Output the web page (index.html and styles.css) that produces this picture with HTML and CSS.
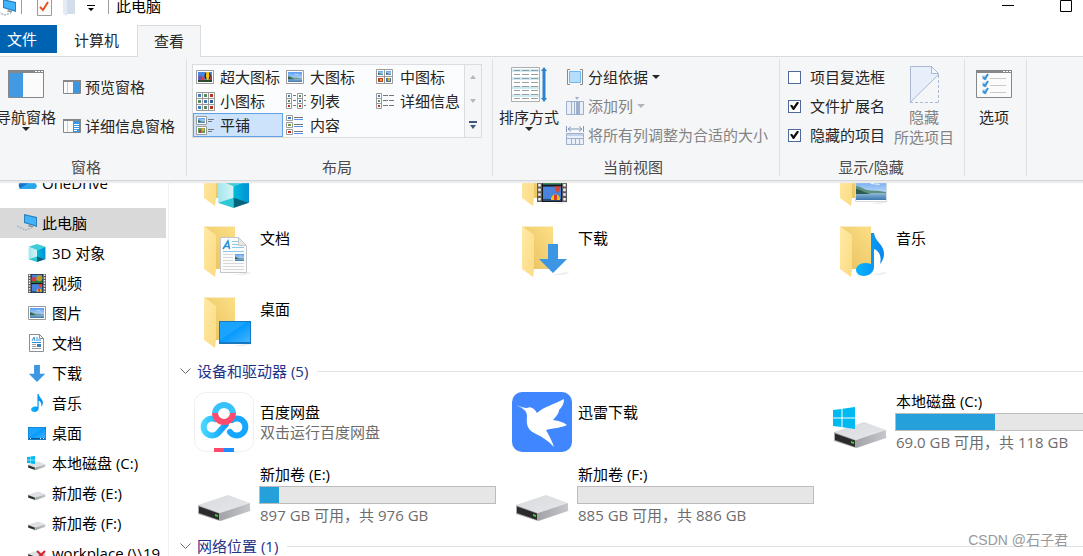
FILE: index.html
```html
<!DOCTYPE html>
<html lang="zh-CN">
<head>
  <meta charset="UTF-8">
  <meta name="viewport" content="width=device-width, initial-scale=1.0">
  <title>此电脑</title>
  <link rel="stylesheet" href="styles.css">
</head>
<body>
  <!-- Shared icons -->
  <svg class="sprite" width="0" height="0" aria-hidden="true">
    <defs>
      <linearGradient id="gFolderBack" x1="0" y1="1" x2="1" y2="0"><stop offset="0" stop-color="#e6c05c"/><stop offset="1" stop-color="#fddf87"/></linearGradient>
      <linearGradient id="gFolderFront" x1="0" y1="0" x2="1" y2="1"><stop offset="0" stop-color="#ffeaa6"/><stop offset="1" stop-color="#fbdb83"/></linearGradient>
      <linearGradient id="gSky" x1="0" y1="0" x2="0" y2="1"><stop offset="0" stop-color="#5b9df0"/><stop offset="1" stop-color="#e8f4fc"/></linearGradient>
      <linearGradient id="gWater" x1="0" y1="0" x2="0" y2="1"><stop offset="0" stop-color="#9cc4de"/><stop offset="1" stop-color="#3c76ac"/></linearGradient>
      <linearGradient id="gDesk" x1="0" y1="0" x2="1" y2="1"><stop offset="0" stop-color="#1ba4ff"/><stop offset=".45" stop-color="#1ba4ff"/><stop offset=".46" stop-color="#0499fd"/><stop offset="1" stop-color="#45b3ff"/></linearGradient>
      <linearGradient id="gTop" x1="0" y1="0" x2="1" y2="1"><stop offset="0" stop-color="#d9dadd"/><stop offset="1" stop-color="#e6e7ea"/></linearGradient>
      <linearGradient id="gSide" x1="0" y1="0" x2="1" y2="0"><stop offset="0" stop-color="#a2a3a6"/><stop offset="1" stop-color="#c6c7ca"/></linearGradient>
      <linearGradient id="gCubeR" x1="0" y1="0" x2="1" y2="0"><stop offset="0" stop-color="#00bcd9"/><stop offset="1" stop-color="#008fd8"/></linearGradient>
      <linearGradient id="gCubeL" x1="0" y1="0" x2="1" y2="0"><stop offset="0" stop-color="#a3e6ec"/><stop offset="1" stop-color="#d5f4f6"/></linearGradient>
      <linearGradient id="gNote" x1="0" y1="0" x2="1" y2="0"><stop offset="0" stop-color="#06b4ff"/><stop offset="1" stop-color="#0a86ee"/></linearGradient>
      <linearGradient id="gPan" x1="0" y1="0" x2="1" y2="0"><stop offset="0" stop-color="#43d6ff"/><stop offset="1" stop-color="#0c9bff"/></linearGradient>
    </defs>

    <symbol id="photo" viewBox="0 0 32 22" preserveAspectRatio="none">
      <path d="M0 0h32v22H0z" fill="url(#gSky)"/>
      <path d="M0 14h32v8H0z" fill="url(#gWater)"/>
      <path d="M0 8c5 0 7 3 12 4s9 0 20 2v1H0z" fill="#5c8f7c"/>
      <path d="M0 11c4 0 9 4 16 5H0z" fill="#2d5b50"/>
      <path d="M15 6c2-2 4-2 5 0 3-1 5 0 6 1z" fill="#fff" opacity=".8"/>
    </symbol>
    <symbol id="balloons" viewBox="0 0 16 10" preserveAspectRatio="none">
      <path d="M0 0h16v10H0z" fill="#4a86df"/>
      <path d="M0 8h16v2H0z" fill="#274d28"/>
      <circle cx="2.6" cy="6" r="2.4" fill="#7b4cad"/><circle cx="5.5" cy="6.5" r="1.8" fill="#d94530"/>
      <circle cx="11" cy="4" r="3.600" fill="#252018"/><path d="M9.500 0h3l.5 4-1 4h-2l-1-4z" fill="#f7c619"/>
      <path d="M14 4h2v4h-2z" fill="#b3333a"/>
    </symbol>
    <symbol id="folder" viewBox="0 0 48 52">
      <path d="M44 46l4 1-8 2H30z" fill="#eee"/>
      <path d="M0 0h31v43H12L0 8z" fill="url(#gFolderBack)"/>
      <path d="M0 0h31v1H0z" fill="#f8edca"/>
      <path d="M0 0l12 9v34l-1 8L0 43z" fill="url(#gFolderFront)"/>
    </symbol>
    <symbol id="cube" viewBox="0 0 32 32">
      <path d="M16 0l15 5-15 6L1 5z" fill="#3dccd8"/>
      <path d="M1 5l15 6v12L1 27z" fill="url(#gCubeL)"/>
      <path d="M31 5l-15 6v12l15 4z" fill="url(#gCubeR)"/>
      <path d="M1 27l15-5v10z" fill="#2ec8d6"/><path d="M31 27l-15-5v10z" fill="#04647e"/>
    </symbol>
    <symbol id="film" viewBox="0 0 30 32" preserveAspectRatio="none">
      <path d="M0 0h30v32H0z" fill="#5b5b5b"/>
      <path d="M2.500 1v30M27.500 1v30" stroke="#f3f3f3" stroke-width="2.500" stroke-dasharray="2.500 2"/>
      <path d="M5 0h20v32H5z" fill="#181818"/>
      <path d="M6 1h18v14H6z" fill="#4a83dc"/><path d="M6 11h18v4H6z" fill="#21783b"/>
      <circle cx="10" cy="9" r="4" fill="#dd3d32"/><circle cx="19" cy="7" r="5" fill="#be9c20"/><path d="M7 5l4 2-2 5z" fill="#8e49b3"/>
      <path d="M6 17h18v14H6z" fill="#4a83dc"/><path d="M17 17h7l-3 6h-1z" fill="#d54434"/><path d="M6 29h18v2H6z" fill="#274b77"/>
      <path d="M14 30c0-7 9-7 9 0z" fill="#f3c418"/><path d="M17 25h3v5h-3z" fill="#d83b2c"/>
    </symbol>
    <symbol id="arrowDown" viewBox="0 0 28 29">
      <path d="M9 0h10v15h9L14 29 0 15h9z" fill="#3d96e4"/>
    </symbol>
    <symbol id="note" viewBox="0 0 28 43">
      <path d="M15 0h3c1 9 10 11 10 21 0 4-2 8-4 10 2-8-1-13-6-15v18c0 5-5 9-10 9-5 0-8-3-8-6 0-5 7-9 15-6z" fill="url(#gNote)"/>
    </symbol>
    <symbol id="desk" viewBox="0 0 32 23" preserveAspectRatio="none">
      <path d="M0 0h32v23H0z" fill="#1479bf"/><path d="M1 1h30v20H1z" fill="url(#gDesk)"/>
    </symbol>
    <symbol id="doc" viewBox="0 0 27 36">
      <path d="M.5.5h18l8 8v27H.5z" fill="#fbfbfb" stroke="#c4c7ca"/>
      <path d="M18.500.5v8h8z" fill="#e7e7e7" stroke="#c4c7ca"/>
      <path d="M3 12L8 4l1.500 8M5 9.500h4" fill="none" stroke="#2b8fd6" stroke-width="1.500"/>
      <path d="M12 4.500h6M12 7.500h6M12 10.500h12M3 14.500h21" stroke="#8fc8e8"/>
      <path d="M3 17.500h10M3 20.500h10M3 23.500h10M3 26.500h21M3 29.500h21M3 32.500h21" stroke="#d6d9dc"/>
      <use href="#photo" x="15" y="17" width="9" height="7"/>
    </symbol>
    <symbol id="docSmall" viewBox="0 0 15 18">
      <path d="M.5.5h10l4 4v13H.5z" fill="#fff" stroke="#8b8f93"/><path d="M10.500.5v4h4" fill="none" stroke="#8b8f93"/>
      <path d="M3 7l2-4 1 4M7 4h2M7 6h5M3 8.500h9" fill="none" stroke="#2b8fd6"/>
      <path d="M3 10.500h4M3 12.500h4M3 14.500h9" stroke="#9aa0a5"/><path d="M8 10h4v3H8z" fill="#3d7db3"/>
    </symbol>
    <symbol id="drive" viewBox="0 0 54 27">
      <path d="M46 12l8 3-30 11-6-1z" fill="#e4e4e4" opacity=".7"/>
      <path d="M0 10L30 0l22 8-30 10z" fill="url(#gTop)"/>
      <path d="M22 18L52 8v8L22 26z" fill="url(#gSide)"/>
      <path d="M0 10l22 8v8L0 19z" fill="#a9aaad"/><path d="M1 11.500l20 7V25L1 18z" fill="#2b2b2b"/>
      <path d="M17 19l3 1v2l-3-1z" fill="#35d32f"/>
    </symbol>
    <symbol id="winlogo" viewBox="0 0 22 22">
      <path d="M0 3l8.500-1v8.500H0zM9.500 1.700L22 0v10.500H9.500zM0 11.500h8.500V20L0 19zM9.500 11.500H22V22l-12.500-1.700z" fill="#00b9f1"/>
    </symbol>
    <symbol id="pc" viewBox="0 0 20 17">
      <path d="M7 0l13 3v10L7 9z" fill="#2c7fbd"/><path d="M8 1.500L19 4v7.500L8 8z" fill="#42b4fb"/>
      <path d="M12 11l4 1v1.500l-5-1z" fill="#8b9298"/>
      <path d="M0 12l8 4 7-2" fill="none" stroke="#aab8c4" stroke-width="1.500" stroke-dasharray="2 1"/>
    </symbol>
  </svg>

  <div class="window">
    <header class="titlebar">
      <svg class="tb-pc" width="17" height="17" viewBox="4 1 17 17"><use href="#pc" width="20" height="17"/></svg>
      <span class="tb-sep"></span>
      <button class="tb-btn" aria-label="属性">
        <svg width="15" height="17" viewBox="0 0 15 17"><path d="M.5-2h14v17.500H.5z" fill="#fafafa" stroke="#9b9b9b"/><path d="M3 7l3 3 5-8" fill="none" stroke="#e8501e" stroke-width="2"/></svg>
      </button>
      <button class="tb-btn tb-folder" aria-label="新建文件夹">
        <svg width="13" height="17" viewBox="0 0 13 17"><path d="M1-1h11v15H4z" fill="#d3ddec"/><path d="M0-2l4 2v16l-4-2z" fill="#e4ebf5"/></svg>
      </button>
      <button class="tb-btn tb-more" aria-label="自定义快速访问工具栏">
        <svg width="8" height="7" viewBox="0 0 8 7"><path d="M0 0h8v1H0zM1 3h6L4 6z"/></svg>
      </button>
      <span class="tb-sep tb-sep-end"></span>
      <h1>此电脑</h1>
      <div class="window-buttons">
        <button class="tb-btn" aria-label="最小化"><svg width="12" height="12"><path d="M0 5h12v1H0z"/></svg></button>
        <button class="tb-btn" aria-label="最大化"><svg width="12" height="12"><path d="M.5.5h11v11H.5z" fill="none" stroke="#000"/></svg></button>
      </div>
    </header>

    <nav class="tabs">
      <button class="tab tab-file">文件</button>
      <button class="tab">计算机</button>
      <button class="tab tab-active">查看</button>
    </nav>

    <section class="ribbon">
      <div class="group group-panes">
        <div class="group-body">
          <button class="big-btn">
            <span class="big-icon">
              <svg width="36" height="28"><path d="M.5.5h35v27H.5z" fill="#fbfbfb" stroke="#85888b"/><path d="M0 0h36v3H0z" fill="#85888b"/><path d="M27 1h2v1h-2zM30 1h2v1h-2zM33 1h2v1h-2z" fill="#fff"/><path d="M1 3h14v24H1z" fill="#429ae3"/></svg>
            </span>
            导航窗格
            <span class="caret"></span>
          </button>
          <div class="pane-list">
            <button class="small-btn">
              <svg width="18" height="14"><path d="M.5.5h17v13H.5z" fill="#fbfbfb" stroke="#85888b"/><path d="M0 0h18v2H0z" fill="#85888b"/><path d="M4.500 2v11" stroke="#ccc"/><path d="M10 2h7v11h-7z" fill="#3c97e2"/></svg>
              预览窗格
            </button>
            <button class="small-btn">
              <svg width="18" height="14"><path d="M.5.5h17v13H.5z" fill="#fbfbfb" stroke="#85888b"/><path d="M0 0h18v2H0z" fill="#85888b"/><path d="M4.500 2v11" stroke="#ccc"/><path d="M10 2h7v11h-7z" fill="#3c97e2"/><path d="M11 5.500h5M11 7.500h5M11 9.500h5M11 11.500h3" stroke="#fff"/></svg>
              详细信息窗格
            </button>
          </div>
        </div>
        <div class="group-label">窗格</div>
      </div>

      <div class="group group-layout">
        <div class="group-body">
          <div class="gallery">
            <button class="view"><svg width="18" height="18"><path d="M.5 2.500h17v13H.5z" fill="#fff" stroke="#9b9b9b"/><use href="#balloons" x="2" y="4" width="14" height="10"/></svg>超大图标</button>
            <button class="view"><svg width="18" height="18"><path d="M.5 2.500h17v13H.5z" fill="#fff" stroke="#9b9b9b"/><use href="#photo" x="2" y="4" width="14" height="10"/></svg>大图标</button>
            <button class="view"><svg width="18" height="18"><path d="M.5 1.500h16v14H.5zM8.500 1v15M0 8.500h17" fill="#fff" stroke="#9b9b9b"/><use href="#photo" x="2" y="3" width="5" height="4"/><use href="#photo" x="10" y="3" width="5" height="4"/><path d="M2 10h5v4H2z" fill="#b3432b"/><path d="M10 10h5v4h-5z" fill="#4b79a5"/><path d="M12 10h2v3h-2zM4 11h2v2H4z" fill="#e3b020"/></svg>中图标</button>
            <button class="view"><svg width="19" height="19"><path d="M.5.5h18v18H.5zM6.500 0v19M12.500 0v19M0 6.500h19M0 12.500h19" fill="#fff" stroke="#9b9b9b"/><path d="M2 2h3v3H2zM8 8h3v3H8zM2 14h3v3H2z" fill="#3e7dba"/><path d="M8 2h3v3H8zM2 8h3v3H2zM8 14h3v3H8z" fill="#598b62"/><path d="M14 2h3v3h-3zM14 14h3v3h-3z" fill="#ba3322"/><path d="M14 8h3v3h-3z" fill="#2c5e9d"/></svg>小图标</button>
            <button class="view"><svg width="20" height="18"><path d="M.5 1.500h5v15h-5zM.5 6.500h5M.5 11.500h5M11.500 1.500h5v15h-5zM11.500 6.500h5M11.500 11.500h5" fill="#fff" stroke="#9b9b9b"/><path d="M7 3.500h3M7 8.500h3M7 13.500h3M18 3.500h2M18 8.500h2M18 13.500h2" stroke="#777"/><path d="M2 3h2v2H2zM13 8h2v2h-2z" fill="#3e7dba"/><path d="M2 8h2v2H2zM13 3h2v2h-2z" fill="#598b62"/><path d="M2 13h2v2H2zM13 13h2v2h-2z" fill="#ba3322"/></svg>列表</button>
            <button class="view"><svg width="19" height="18"><path d="M.5 1.500h5v15h-5zM.5 6.500h5M.5 11.500h5" fill="#fff" stroke="#9b9b9b"/><path d="M7 3.500h5M13 3.500h5M7 8.500h5M13 8.500h5M7 13.500h5M13 13.500h5" stroke="#777"/><path d="M2 3h2v2H2z" fill="#3e7dba"/><path d="M2 8h2v2H2z" fill="#598b62"/><path d="M2 13h2v2H2z" fill="#ba3322"/></svg>详细信息</button>
            <button class="view view-selected"><svg width="18" height="19"><path d="M.5.5h10v8H.5zM.5 10.500h10v8H.5z" fill="#fff" stroke="#9b9b9b"/><use href="#photo" x="2" y="2" width="7" height="5"/><path d="M2 12h7v5H2z" fill="#6c9c5c"/><path d="M6 12h2v3H6z" fill="#e3b020"/><path d="M3 14h2v3H3z" fill="#ad3d46"/><path d="M12 3.500h6M12 5.500h4M12 13.500h6M12 15.500h4" stroke="#777"/></svg>平铺</button>
            <button class="view"><svg width="18" height="20"><path d="M.5.5h6v5h-6zM.5 7.500h6v5h-6zM.5 14.500h6v5h-6z" fill="#fff" stroke="#9b9b9b"/><path d="M2 2h3v2H2z" fill="#3e7dba"/><path d="M2 9h3v2H2z" fill="#6c9c3c"/><path d="M2 16h3v2H2z" fill="#ba3322"/><path d="M8 2.500h9M8 9.500h9M8 16.500h9" stroke="#777"/><path d="M8 4.500h9M8 11.500h9M8 18.500h9" stroke="#5793ee"/></svg>内容</button>
          </div>
          <div class="gallery-scroll">
            <button aria-label="向上"><svg width="6" height="4"><path d="M0 4h6L3 0z" fill="#b3b9c1"/></svg></button>
            <button aria-label="向下"><svg width="6" height="4"><path d="M0 0h6L3 4z" fill="#b3b9c1"/></svg></button>
            <button aria-label="更多"><svg width="8" height="8"><path d="M0 0h8v2H0zM1 4h6L4 8z" fill="#41587b"/></svg></button>
          </div>
        </div>
        <div class="group-label">布局</div>
      </div>

      <div class="group group-sort">
        <div class="group-body">
          <button class="big-btn">
            <span class="big-icon">
              <svg width="36" height="37"><path d="M.5 1.500h28v34H.5z" fill="#fff" stroke="#adadad"/><path d="M1 3h27v3H1zM1 11h27v3H1zM1 20h27v3H1zM1 28h27v3H1z" fill="#cdeaf5"/><path d="M3 4.500h6M11 4.500h7M20 4.500h7M3 8.500h6M11 8.500h7M20 8.500h7M3 12.500h6M11 12.500h7M20 12.500h7M3 16.500h6M11 16.500h7M20 16.500h7M3 20.500h6M11 20.500h7M20 20.500h7M3 24.500h6M11 24.500h7M20 24.500h7M3 28.500h6M11 28.500h7M20 28.500h7M3 32.500h6M11 32.500h7M20 32.500h7" stroke="#9d9d9d"/><path d="M33 1l3 4h-1.500v27H36l-3 4-3-4h1.500V5H30z" fill="#2a84cf"/></svg>
            </span>
            排序方式
            <span class="caret"></span>
          </button>
          <div class="sort-list">
            <button class="small-btn">
              <svg width="18" height="18"><path d="M4 1.500H1.500v15H4M14 1.500h2.500v15H14" fill="none" stroke="#8a8a8a"/><path d="M3.500 3.500h11v11h-11z" fill="#b4defc" stroke="#71b7ee"/></svg>
              分组依据 <span class="caret"></span>
            </button>
            <button class="small-btn" disabled>
              <svg width="18" height="18"><path d="M9 0h4l-2 3z" fill="#9eb0cd"/><path d="M.5 4.500h17v13H.5zM5.500 4v14M8.500 4v14M13.500 4v14" fill="#eaf0f9" stroke="#9eb0cd"/><path d="M10 5h3v12h-3z" fill="#9eb0cd"/></svg>
              添加列 <span class="caret"></span>
            </button>
            <button class="small-btn" disabled>
              <svg width="18" height="19"><path d="M.5 0v6M17.500 0v6M2 3h14M5 .5L2 3l3 2.500M13 .5L16 3l-3 2.500" fill="none" stroke="#8297ba"/><path d="M.5 7.500h17v11H.5z" fill="#eaf0f9" stroke="#9eb0cd"/><path d="M1 8h16v2H1z" fill="#c6d3e6"/><path d="M0 12.500h18M5.500 13v6M9.500 13v6M13.500 13v6" stroke="#9eb0cd"/></svg>
              将所有列调整为合适的大小
            </button>
          </div>
        </div>
        <div class="group-label">当前视图</div>
      </div>

      <div class="group group-show">
        <div class="group-body">
          <div class="check-list">
            <label class="check"><input type="checkbox">项目复选框</label>
            <label class="check"><input type="checkbox" checked>文件扩展名</label>
            <label class="check"><input type="checkbox" checked>隐藏的项目</label>
          </div>
          <button class="big-btn" disabled>
            <span class="big-icon">
              <svg width="29" height="37"><path d="M.5.5h21l7 8L.5 36z" fill="#e6effa" stroke="#a8b9d1"/><path d="M21.500.5v7h7z" fill="#f5f8fc" stroke="#a8b9d1"/><path d="M28.500 9v27.500M0 36.500h28" fill="none" stroke="#a8b9d1" stroke-dasharray="3 2"/></svg>
            </span>
            隐藏<br>所选项目
          </button>
        </div>
        <div class="group-label">显示/隐藏</div>
      </div>

      <div class="group group-options">
        <div class="group-body">
          <button class="big-btn">
            <span class="big-icon">
              <svg width="36" height="28"><path d="M.5.5h35v27H.5z" fill="#fbfbfb" stroke="#85888b"/><path d="M0 0h36v3H0z" fill="#85888b"/><path d="M27 1h2v1h-2zM30 1h2v1h-2zM33 1h2v1h-2z" fill="#fff"/><path d="M6 5h5v5H6zM6 12h5v5H6zM6 19h5v5H6z" fill="#d5e3ee"/><path d="M7 7l2 2 3-5M7 14l2 2 3-5M7 21l2 2 3-5" fill="none" stroke="#2f93e0" stroke-width="2"/><path d="M14 8.500h16M14 15.500h16M14 22.500h16" stroke="#c9c9c9"/></svg>
            </span>
            选项
          </button>
        </div>
      </div>
    </section>

    <div class="main">
      <aside class="sidebar">
        <ul class="tree">
          <li><a class="onedrive" href="#onedrive"><svg width="20" height="14" viewBox="0 0 20 14"><path d="M4 13a4 4 0 0 1-.5-7A6 6 0 0 1 14 4a5 5 0 0 1 2 9z" fill="#1573cc"/><path d="M2 13l11-7a5 5 0 0 1 6 2c2 3 0 5-2 5z" fill="#28a8ea"/></svg>OneDrive</a></li>
          <li><a class="selected" href="#pc"><svg width="20" height="18"><use href="#pc" width="20" height="17"/></svg>此电脑</a></li>
          <li><a class="child" href="#3d"><svg width="18" height="18"><use href="#cube" width="18" height="18"/></svg>3D 对象</a></li>
          <li><a class="child" href="#videos"><svg width="18" height="19"><use href="#film" width="18" height="19"/></svg>视频</a></li>
          <li><a class="child" href="#pictures"><svg width="18" height="14"><path d="M.5.5h17v13H.5z" fill="#fff" stroke="#9a9a9a"/><use href="#photo" x="2" y="2" width="14" height="10"/></svg>图片</a></li>
          <li><a class="child" href="#documents"><svg width="18" height="18"><use href="#docSmall" x="1" width="15" height="18"/></svg>文档</a></li>
          <li><a class="child" href="#downloads"><svg width="18" height="17"><use href="#arrowDown" width="18" height="17"/></svg>下载</a></li>
          <li><a class="child" href="#music"><svg width="18" height="18"><use href="#note" x="3" width="12" height="18"/></svg>音乐</a></li>
          <li><a class="child" href="#desktop"><svg width="18" height="13"><use href="#desk" width="18" height="13"/><path d="M1 11h16v1H1z" fill="#0b5c96"/><path d="M2 11h1v1H2zM12 11h1v1h-1zM15 11h1v1h-1z" fill="#fff"/></svg>桌面</a></li>
          <li><a class="child" href="#c"><svg width="18" height="15"><use href="#drive" y="5" width="18" height="10"/><use href="#winlogo" x="-1" width="8" height="8"/></svg>本地磁盘 (C:)</a></li>
          <li><a class="child" href="#e"><svg width="18" height="15"><use href="#drive" y="5" width="18" height="10"/></svg>新加卷 (E:)</a></li>
          <li><a class="child" href="#f"><svg width="18" height="15"><use href="#drive" y="5" width="18" height="10"/></svg>新加卷 (F:)</a></li>
          <li><a class="child" href="#workplace"><svg width="18" height="15"><use href="#drive" y="4" width="18" height="10"/><path d="M9 5l8 8M17 5l-8 8" stroke="#d8202c" stroke-width="2"/></svg>workplace (\\19</a></li>
        </ul>
      </aside>

      <section class="content">
        <div class="tiles folders">
          <a class="tile" href="#3d"><svg width="60" height="60"><use href="#folder" x="10" y="4" width="48" height="52"/><use href="#cube" x="23" y="24" width="33" height="33"/></svg></a>
          <a class="tile" href="#videos"><svg width="60" height="60"><use href="#folder" x="10" y="4" width="48" height="52"/><use href="#film" x="25" y="18" width="30" height="33"/></svg></a>
          <a class="tile" href="#pictures"><svg width="60" height="60"><use href="#folder" x="10" y="4" width="48" height="52"/><path d="M25.500 26.500h31v24h-31z" fill="#fff" stroke="#d5dade"/><use href="#photo" x="26" y="27" width="30" height="22"/></svg></a>
          <a class="tile" href="#documents"><svg width="60" height="60"><use href="#folder" x="10" y="4" width="48" height="52"/><use href="#doc" x="26" y="15" width="27" height="36"/></svg><span class="name">文档</span></a>
          <a class="tile" href="#downloads"><svg width="60" height="60"><use href="#folder" x="10" y="4" width="48" height="52"/><use href="#arrowDown" x="27" y="22" width="28" height="29"/></svg><span class="name">下载</span></a>
          <a class="tile" href="#music"><svg width="60" height="60"><use href="#folder" x="10" y="4" width="48" height="52"/><use href="#note" x="26" y="11" width="28" height="43"/></svg><span class="name">音乐</span></a>
          <a class="tile" href="#desktop"><svg width="60" height="60"><use href="#folder" x="10" y="4" width="48" height="52"/><use href="#desk" x="25" y="28" width="32" height="23"/></svg><span class="name">桌面</span></a>
        </div>

        <h2 class="section-title"><svg width="11" height="7"><path d="M.5.5l5 5 5-5" fill="none" stroke="#6b6b6b"/></svg>设备和驱动器 (5)</h2>
        <div class="tiles devices">
          <a class="tile" href="#baidu">
            <svg width="60" height="60">
              <rect x=".5" y=".5" width="59" height="59" rx="11" fill="#fff" stroke="#f0f0f0"/>
              <g fill="none" stroke-width="6">
                <path d="M21 22a9 9 0 0 1 18 0" stroke="#38c1fb"/>
                <path d="M33 31L25 40a8.500 8.500 0 1 1-2-12" stroke="url(#gPan)"/>
                <path d="M36 40a8.500 8.500 0 1 0 2-12" stroke="#15a7ff" stroke-linecap="round"/>
                <path d="M21 21a9 9 0 0 0 18 0" stroke="#fc4c6e"/>
              </g>
              <path d="M20 56h10v4H20z" fill="#fb4a6c"/><path d="M30 56h10v4H30z" fill="#1d8dfb"/>
            </svg>
            <div class="info"><span class="name">百度网盘</span><span class="detail">双击运行百度网盘</span></div>
          </a>
          <a class="tile" href="#xunlei">
            <svg width="60" height="60"><rect width="60" height="60" rx="10" fill="#4086ff"/><path d="M4 13c5 2 8 3 11 3 4-2 7 0 10 5C31 15 43 12 52 7c0 5-2 8-5 11l0 1c-1 4-4 6-6 9 6 1 10 2 14 5-6 3-13 3-21 5 3 5 6 11 8 17-6-6-11-10-18-13-8-4-10-8-9-18 0-5-4-8-11-11z" fill="#fff"/></svg>
            <div class="info"><span class="name">迅雷下载</span><span class="detail"></span></div>
          </a>
          <a class="tile" href="#c">
            <svg width="60" height="60"><use href="#drive" x="4" y="30" width="54" height="27"/><use href="#winlogo" x="3" y="15" width="22" height="22"/></svg>
            <div class="info"><span class="name">本地磁盘 (C:)</span><div class="usage"><div class="used" style="width: 42%"></div></div><span class="detail">69.0 GB 可用，共 118 GB</span></div>
          </a>
          <a class="tile" href="#e">
            <svg width="60" height="60"><use href="#drive" x="4" y="30" width="54" height="27"/></svg>
            <div class="info"><span class="name">新加卷 (E:)</span><div class="usage"><div class="used" style="width: 8%"></div></div><span class="detail">897 GB 可用，共 976 GB</span></div>
          </a>
          <a class="tile" href="#f">
            <svg width="60" height="60"><use href="#drive" x="4" y="30" width="54" height="27"/></svg>
            <div class="info"><span class="name">新加卷 (F:)</span><div class="usage"><div class="used" style="width: 0%"></div></div><span class="detail">885 GB 可用，共 886 GB</span></div>
          </a>
        </div>

        <h2 class="section-title"><svg width="11" height="7"><path d="M.5.5l5 5 5-5" fill="none" stroke="#6b6b6b"/></svg>网络位置 (1)</h2>
      </section>
    </div>

    <div class="watermark">CSDN @石子君</div>
  </div>
</body>
</html>
```
FILE: styles.css
```css
* {
  box-sizing: border-box;
}
body {
  margin: 0;
  font-family: "Open Sans", "Noto Sans CJK SC", sans-serif;
  font-size: 15px;
  line-height: 20px;
  color: #000;
  background-color: #fff;
}
button {
  margin: 0;
  padding: 0;
  border: none;
  background: none;
  font: inherit;
  color: inherit;
  white-space: nowrap;
}
a {
  color: inherit;
  text-decoration: none;
}
svg {
  display: block;
  flex-shrink: 0;
}
.sprite {
  position: absolute;
}
.window {
  position: relative;
  display: flex;
  flex-direction: column;
  height: 100vh;
  overflow: hidden;
}

/* Title bar */
.titlebar {
  display: flex;
  align-items: flex-start;
  height: 25px;
  flex-shrink: 0;
}
.tb-sep {
  width: 1px;
  height: 14px;
  margin: 0 15px 0 4px;
  background-color: #9b9b9b;
}
.tb-folder {
  margin-left: 11px;
}
.tb-more {
  margin: 5px 12px 0 11px;
}
.tb-sep-end {
  margin: 0 7px 0 1px;
}
.titlebar h1 {
  margin: 0;
  font-size: 15px;
  font-weight: normal;
  line-height: 13px;
}
.window-buttons {
  display: flex;
  gap: 46px;
  margin-left: auto;
  padding-right: 11px;
}

/* Tabs */
.tabs {
  display: flex;
  height: 32px;
  flex-shrink: 0;
  border-bottom: 1px solid #dadbdc;
}
.tab {
  height: 31px;
  padding: 0 18px 2px 17px;
  color: #262626;
}
.tab-file {
  height: 28px;
  padding: 0 20px 0 7px;
  background-color: #0063b1;
  color: #fff;
}
.tab-active {
  height: 32px;
  padding: 0 16px 2px;
  border: 1px solid #dadbdc;
  border-bottom: none;
  background-color: #f5f6f7;
}

/* Ribbon */
.ribbon {
  z-index: 1;
  display: flex;
  flex-shrink: 0;
  margin-left: -14px;
  padding: 2px 0 4px;
  background-color: #f5f6f7;
  border-bottom: 1px solid #d5d6d7;
  box-shadow: 0 2px 1px #ececec;
  color: #262626;
}
.group {
  display: flex;
  flex-direction: column;
  justify-content: space-between;
  height: 117px;
  border-right: 1px solid #e0e1e2;
}
.group-body {
  display: flex;
  padding-top: 5px;
}
.group-label {
  line-height: 18px;
  text-align: center;
  color: #4a4a4a;
}
.group-panes {
  padding: 0 11px 0 6px;
}
.group-panes .group-body {
  gap: 3px;
}
.group-panes .group-label {
  padding-left: 5px;
}
.group-layout {
  padding: 0 10px 0 5px;
}
.group-sort {
  padding: 0 11px 0 5px;
}
.group-sort .group-body {
  gap: 6px;
}
.group-show {
  padding: 0 10px 0 8px;
}
.group-show .group-body {
  gap: 9px;
}
.group-options {
  padding: 0 14px 0 11px;
}
.big-btn {
  display: flex;
  flex-direction: column;
  align-items: center;
  min-width: 36px;
}
.group-panes .big-btn {
  width: 68px;
}
.group-sort .big-btn {
  width: 62px;
}
.big-icon {
  display: flex;
  align-items: center;
  height: 40px;
  margin-bottom: 3px;
}
.caret {
  border: 4px solid transparent;
  border-top-color: currentColor;
  border-bottom: none;
}
.small-btn {
  display: flex;
  align-items: center;
  gap: 4px;
  height: 20px;
}
button:disabled {
  color: #838383;
}
.small-btn:disabled .caret {
  color: #b5b5b5;
}
.pane-list {
  display: flex;
  flex-direction: column;
  gap: 19px;
  padding-top: 13px;
}
.sort-list,
.check-list {
  display: flex;
  flex-direction: column;
  gap: 9px;
  padding-top: 3px;
}
.check {
  display: flex;
  align-items: center;
  gap: 9px;
  white-space: nowrap;
}
.check input {
  display: grid;
  place-items: center;
  appearance: none;
  width: 13px;
  height: 13px;
  margin: 0;
  border: 1px solid #50699a;
  background-color: #fff;
}
.check input:checked::after {
  content: "";
  width: 9px;
  height: 9px;
  background-color: #111;
  clip-path: polygon(0 45%, 22% 35%, 38% 58%, 80% 0, 100% 15%, 45% 95%, 32% 95%);
}

/* Layout gallery */
.gallery {
  display: grid;
  grid-template-columns: 90px 90px 91px;
  grid-auto-rows: 24px;
  border: 1px solid #dcdddf;
  border-right: none;
  background-color: #fbfcfd;
}
.view {
  display: flex;
  align-items: center;
  padding-left: 2px;
  border: 1px solid transparent;
}
.view svg {
  width: 20px;
  margin-right: 4px;
}
.view-selected {
  border-color: #62a2e4;
  background-color: #cde3fc;
}
.gallery-scroll {
  display: grid;
  grid-template-rows: repeat(3, 1fr);
  width: 18px;
  border: 1px solid #dcdddf;
}
.gallery-scroll button {
  display: grid;
  place-items: center;
}

/* Navigation tree */
.main {
  display: flex;
  flex: 1;
  min-height: 0;
  overflow: hidden;
}
.sidebar {
  width: 169px;
  flex-shrink: 0;
  padding-right: 2px;
  border-right: 1px solid #f0f0f0;
}
.tree {
  margin: -13px 0 0;
  padding: 0;
  list-style: none;
}
.tree a {
  display: flex;
  align-items: center;
  gap: 5px;
  height: 30px;
  padding-left: 17px;
  white-space: nowrap;
}
.tree .onedrive {
  margin-bottom: 10px;
}
.tree .selected {
  background-color: #d9d9d9;
}
.tree .child {
  gap: 6px;
  padding-left: 28px;
}
.tree .child svg {
  overflow: visible;
}

/* Folder and device tiles */
.content {
  flex: 1;
  min-width: 0;
  margin-top: -30px;
  padding-left: 11px;
}
.tiles {
  display: grid;
  grid-template-columns: repeat(3, 318px);
  padding-left: 14px;
}
.tile {
  display: flex;
  gap: 6px;
  height: 60px;
  white-space: nowrap;
}
.folders {
  row-gap: 11px;
}
.folders .name {
  padding-top: 6px;
}
.devices {
  row-gap: 13px;
  padding-bottom: 3px;
}
.info {
  display: flex;
  flex-direction: column;
  justify-content: center;
  margin-top: -1px;
}
.detail {
  min-height: 20px;
  color: #6d6d6d;
}
.usage {
  width: 237px;
  height: 18px;
  margin: 2px 0 1px -1px;
  border: 1px solid #bcbcbc;
  background-color: #e6e6e6;
}
.used {
  height: 16px;
  background-color: #26a0da;
}
.section-title {
  display: flex;
  align-items: center;
  gap: 6px;
  margin: 8px 0 11px;
  font-size: 15px;
  font-weight: normal;
  color: #1e3287;
}
.section-title::after {
  content: "";
  flex: 1;
  height: 1px;
  margin-left: 3px;
  background-color: #e2e2e2;
}

.watermark {
  position: absolute;
  right: 15px;
  bottom: 6px;
  font-family: "Liberation Sans", "Noto Sans CJK SC", sans-serif;
  font-size: 14px;
  color: #999;
}
```
